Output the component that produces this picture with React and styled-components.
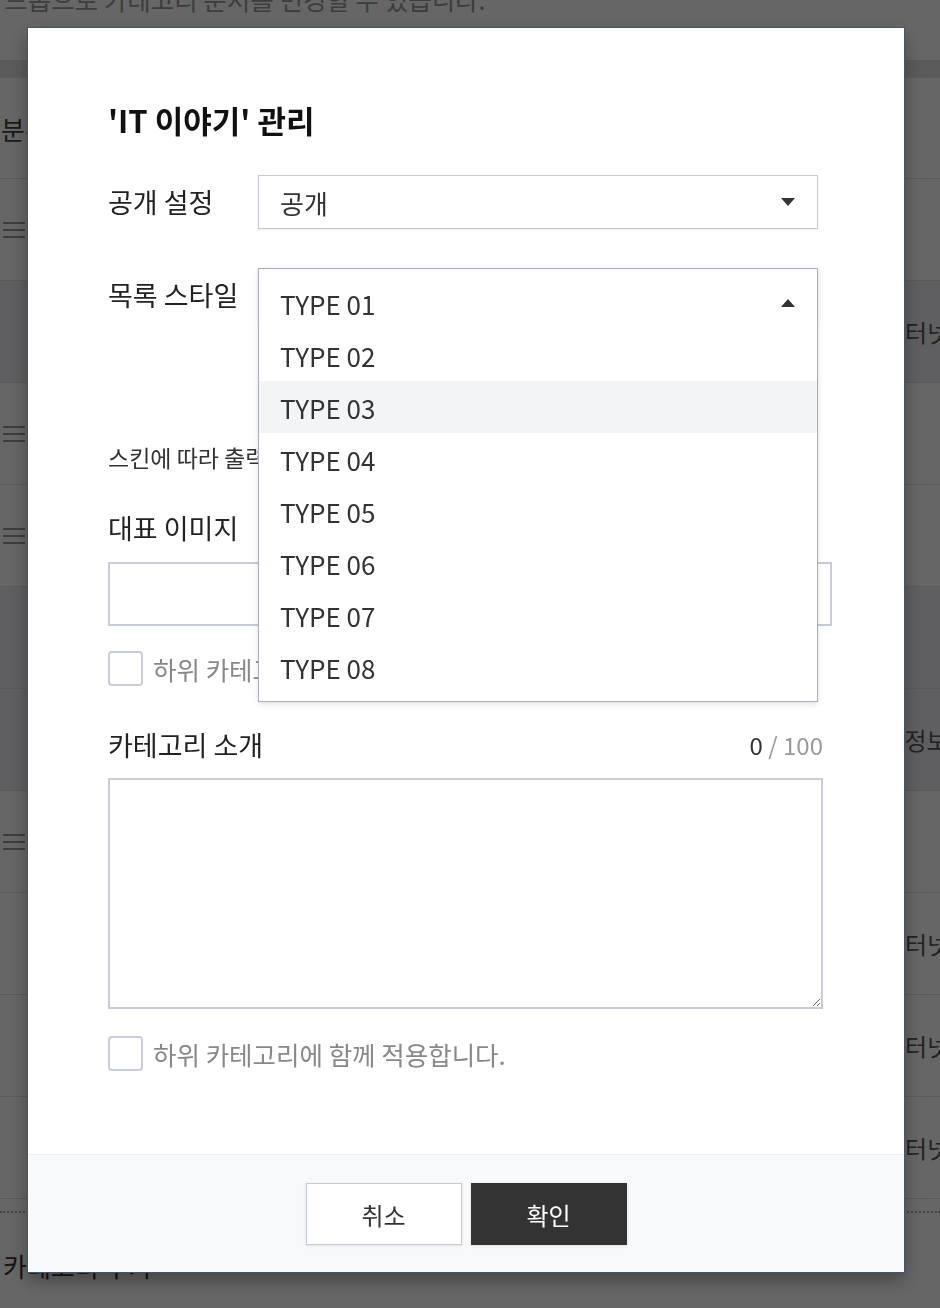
import styled, { createGlobalStyle } from "styled-components";

const GlobalStyle = createGlobalStyle`
  html, body {
    margin: 0;
    padding: 0;
    overflow: hidden;
    background: #fff;
  }
  body {
    font-family: "Noto Sans CJK KR", "Noto Sans", sans-serif;
    color: #333;
  }
  * {
    box-sizing: border-box;
  }
`;

const FONT = `"Noto Sans CJK KR", "Noto Sans", sans-serif`;

/* ---------- page behind the dialog ---------- */

const Page = styled.div`
  width: 940px;
  height: 1308px;
  overflow: hidden;
`;

const Hint = styled.p`
  margin: -16px 0 0 -101px;
  font-size: 25.5px;
  line-height: 30px;
  color: #999;
  white-space: nowrap;
`;

const HeadBand = styled.div`
  margin-top: 46px;
  height: 18px;
  background: #e3e3e6;
`;

const HeadRow = styled.div`
  height: 101px;
  display: flex;
  align-items: center;
  border-bottom: 1px solid #e0e0e0;
  font-size: 26px;
  color: #444;
  padding-left: 1px;
  white-space: nowrap;
`;

const ListRow = styled.div`
  height: 102px;
  display: grid;
  grid-template-columns: 883px 1fr;
  align-items: center;
  border-bottom: 1px solid #e0e0e0;
  background: ${(p) => (p.$sub ? "#edeef3" : "#fff")};
`;

const Handle = styled.span`
  display: flex;
  flex-direction: column;
  gap: 5px;
  width: 22px;
  margin-left: 3px;

  i {
    display: block;
    height: 2px;
    background: #999;
  }
`;

const RowName = styled.span`
  font-size: 24px;
  color: #555;
  white-space: nowrap;
`;

const Dotted = styled.div`
  margin-top: 12px;
  border-top: 2px dotted #aaa;
`;

const AddLink = styled.div`
  margin-top: 34px;
  padding-left: 3px;
  font-size: 26px;
  color: #333;
  white-space: nowrap;
`;

/* ---------- dialog ---------- */

const Overlay = styled.div`
  position: fixed;
  inset: 0;
  background: rgba(0, 0, 0, 0.6);
  padding: 28px 0 0 28px;
`;

const Dialog = styled.div`
  width: 876px;
  background: #fff;
  box-shadow: 0 0 0 1px #4b5466, 0 8px 18px rgba(0, 0, 0, 0.35);
  font-family: ${FONT};
`;

const Body = styled.div`
  padding: 72px 81px 83px 80px;
`;

const Title = styled.h2`
  margin: 0 0 35px;
  font-size: 31px;
  line-height: 40px;
  font-weight: 700;
  color: #111;
`;

const FieldRow = styled.div`
  display: flex;
  align-items: flex-start;
  margin-bottom: ${(p) => p.$gap}px;
`;

const FieldLabel = styled.label`
  width: 150px;
  flex-shrink: 0;
  font-size: 27px;
  line-height: 54px;
  color: #222;
  white-space: nowrap;
`;

const SelectWrap = styled.div`
  position: relative;
  width: 560px;
`;

const SelectBox = styled.div`
  height: 54px;
  display: flex;
  align-items: center;
  justify-content: space-between;
  padding: 0 22px 0 21px;
  border: 1px solid #c5cad5;
  box-shadow: 0 1px 2px rgba(0, 0, 0, 0.08);
  background: #fff;
  font-size: 26px;
  color: #333;
`;

const Caret = styled.span`
  width: 0;
  height: 0;
  border-left: 7px solid transparent;
  border-right: 7px solid transparent;
  ${(p) =>
    p.$up ? "border-bottom: 8px solid #333;" : "border-top: 8px solid #333;"}
`;

const Menu = styled.ul`
  position: absolute;
  top: 0;
  left: 0;
  right: 0;
  z-index: 5;
  margin: 0;
  padding: 8px 0;
  list-style: none;
  background: #fff;
  border: 1px solid #a9aebb;
  box-shadow: 0 2px 6px rgba(0, 0, 0, 0.12);
`;

const MenuItem = styled.li`
  height: 52px;
  display: flex;
  align-items: center;
  justify-content: space-between;
  padding: 0 22px 0 21px;
  font-size: 26px;
  color: #333;
  background: ${(p) => (p.$hover ? "#f3f4f6" : "transparent")};
`;

const Help = styled.p`
  margin: 0 0 39px;
  font-size: 23px;
  line-height: 30px;
  color: #333;
  white-space: nowrap;
`;

const BlockLabel = styled.div`
  display: flex;
  justify-content: space-between;
  align-items: center;
  margin-bottom: ${(p) => p.$gap}px;
  font-size: 27px;
  line-height: 34px;
  color: #222;
`;

const Counter = styled.span`
  font-size: 24px;
  color: #333;

  em {
    font-style: normal;
    color: #999;
  }
`;

const ImageField = styled.div`
  width: 724px;
  height: 64px;
  border: 2px solid #c8ccd6;
  margin-bottom: 24px;
`;

const CheckRow = styled.label`
  display: flex;
  align-items: center;
  gap: 10px;
  height: 36px;
  margin-bottom: ${(p) => p.$gap}px;
  font-size: 25.5px;
  color: #888;
  white-space: nowrap;
`;

const CheckBox = styled.span`
  width: 35px;
  height: 35px;
  border: 2px solid #c8ccd6;
  border-radius: 4px;
  background: #fff;
  flex-shrink: 0;
`;

const Intro = styled.textarea`
  display: block;
  width: 715px;
  height: 231px;
  margin: 0 0 26px;
  border: 2px solid #c8ccd6;
  border-radius: 0;
  resize: vertical;
  outline: none;
  font-family: ${FONT};
  font-size: 20px;
`;

const Footer = styled.div`
  display: flex;
  justify-content: center;
  gap: 9px;
  padding: 28px 0 27px;
  border-top: 1px solid #eceef2;
  background: #f8f9fb;
`;

const Button = styled.button`
  width: 156px;
  height: 62px;
  font-family: ${FONT};
  font-size: 24px;
  cursor: pointer;
  border: 1px solid ${(p) => (p.$primary ? "#333" : "#c5cad5")};
  background: ${(p) => (p.$primary ? "#333" : "#fff")};
  color: ${(p) => (p.$primary ? "#fff" : "#333")};
  box-shadow: 0 1px 3px rgba(0, 0, 0, 0.1);
`;

const rows = [
  { icon: true },
  { sub: true, name: "인터넷" },
  { icon: true },
  { icon: true },
  { sub: true },
  { sub: true, name: "IT정보" },
  { icon: true },
  { name: "인터넷" },
  { name: "인터넷" },
  { name: "인터넷" },
];

const types = ["TYPE 01", "TYPE 02", "TYPE 03", "TYPE 04", "TYPE 05", "TYPE 06", "TYPE 07", "TYPE 08"];

export default function App() {
  return (
    <>
      <GlobalStyle />
      <Page>
        <Hint>드래그 앤 드롭으로 카테고리 순서를 변경할 수 있습니다.</Hint>
        <HeadBand />
        <HeadRow>분류 전체보기</HeadRow>
        {rows.map((r, i) => (
          <ListRow key={i} $sub={r.sub}>
            <span>
              {r.icon && (
                <Handle>
                  <i />
                  <i />
                  <i />
                </Handle>
              )}
            </span>
            <RowName>{r.name}</RowName>
          </ListRow>
        ))}
        <Dotted />
        <AddLink>카테고리 추가</AddLink>
      </Page>

      <Overlay>
        <Dialog>
          <Body>
            <Title>'IT 이야기' 관리</Title>

            <FieldRow $gap={39}>
              <FieldLabel>공개 설정</FieldLabel>
              <SelectWrap>
                <SelectBox>
                  공개
                  <Caret />
                </SelectBox>
              </SelectWrap>
            </FieldRow>

            <FieldRow $gap={120}>
              <FieldLabel>목록 스타일</FieldLabel>
              <SelectWrap>
                <SelectBox>
                  TYPE 01
                  <Caret $up />
                </SelectBox>
                <Menu>
                  {types.map((t, i) => (
                    <MenuItem key={t} $hover={i === 2}>
                      {t}
                      {i === 0 && <Caret $up />}
                    </MenuItem>
                  ))}
                </Menu>
              </SelectWrap>
            </FieldRow>

            <Help>스킨에 따라 출력되는 목록 스타일이 다를 수 있습니다.</Help>

            <BlockLabel $gap={17}>대표 이미지</BlockLabel>
            <ImageField />
            <CheckRow $gap={42}>
              <CheckBox />
              하위 카테고리에 함께 적용합니다.
            </CheckRow>

            <BlockLabel $gap={16}>
              카테고리 소개
              <Counter>
                0 <em>/ 100</em>
              </Counter>
            </BlockLabel>
            <Intro />
            <CheckRow $gap={0}>
              <CheckBox />
              하위 카테고리에 함께 적용합니다.
            </CheckRow>
          </Body>
          <Footer>
            <Button>취소</Button>
            <Button $primary>확인</Button>
          </Footer>
        </Dialog>
      </Overlay>
    </>
  );
}
